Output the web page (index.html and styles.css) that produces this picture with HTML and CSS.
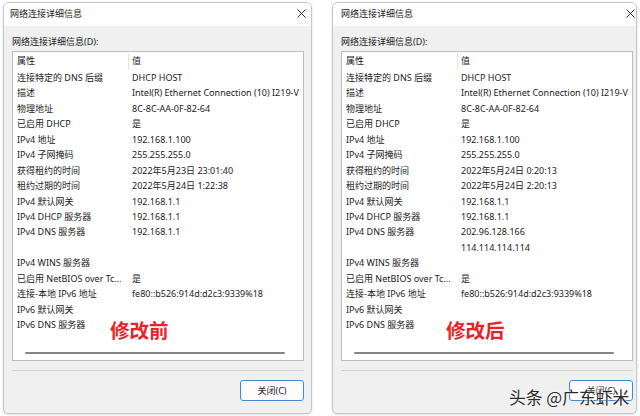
FILE: index.html
```
<!DOCTYPE html>
<html lang="zh-CN">
<head>
<meta charset="utf-8">
<title>网络连接详细信息</title>
<link rel="stylesheet" href="styles.css">
</head>
<body>
<div class="desk">
  <div class="win">
    <div class="titlebar">
      <span class="title">网络连接详细信息</span>
      <svg class="close-x" width="9" height="9" viewBox="0 0 9 9"><path d="M0.5 0.5L8.5 8.5M8.5 0.5L0.5 8.5" stroke="#2b2b2b" stroke-width="1" fill="none"/></svg>
    </div>
    <div class="content">
      <div class="label">网络连接详细信息(D):</div>
      <div class="list">
        <div class="head"><span class="h1">属性</span><span class="h2">值</span></div>
        <div class="row"><span class="c1">连接特定的 DNS 后缀</span><span class="c2">DHCP HOST</span></div>
        <div class="row"><span class="c1">描述</span><span class="c2">Intel(R) Ethernet Connection (10) I219-V</span></div>
        <div class="row"><span class="c1">物理地址</span><span class="c2">8C-8C-AA-0F-82-64</span></div>
        <div class="row"><span class="c1">已启用 DHCP</span><span class="c2">是</span></div>
        <div class="row"><span class="c1">IPv4 地址</span><span class="c2">192.168.1.100</span></div>
        <div class="row"><span class="c1">IPv4 子网掩码</span><span class="c2">255.255.255.0</span></div>
        <div class="row"><span class="c1">获得租约的时间</span><span class="c2">2022年5月23日 23:01:40</span></div>
        <div class="row"><span class="c1">租约过期的时间</span><span class="c2">2022年5月24日 1:22:38</span></div>
        <div class="row"><span class="c1">IPv4 默认网关</span><span class="c2">192.168.1.1</span></div>
        <div class="row"><span class="c1">IPv4 DHCP 服务器</span><span class="c2">192.168.1.1</span></div>
        <div class="row"><span class="c1">IPv4 DNS 服务器</span><span class="c2">192.168.1.1</span></div>
        <div class="row"><span class="c1"></span><span class="c2"></span></div>
        <div class="row"><span class="c1">IPv4 WINS 服务器</span><span class="c2"></span></div>
        <div class="row"><span class="c1">已启用 NetBIOS over Tc...</span><span class="c2">是</span></div>
        <div class="row"><span class="c1">连接-本地 IPv6 地址</span><span class="c2">fe80::b526:914d:d2c3:9339%18</span></div>
        <div class="row"><span class="c1">IPv6 默认网关</span><span class="c2"></span></div>
        <div class="row"><span class="c1">IPv6 DNS 服务器</span><span class="c2"></span></div>
        <div class="note note-before">修改前</div>
        <div class="hscroll"></div>
      </div>
      <div class="sep"></div>
      <div class="footer"><button class="btn">关闭(C)</button></div>
    </div>
  </div>

  <div class="win win-right">
    <div class="titlebar">
      <span class="title">网络连接详细信息</span>
      <svg class="close-x" width="9" height="9" viewBox="0 0 9 9"><path d="M0.5 0.5L8.5 8.5M8.5 0.5L0.5 8.5" stroke="#2b2b2b" stroke-width="1" fill="none"/></svg>
    </div>
    <div class="content">
      <div class="label">网络连接详细信息(D):</div>
      <div class="list">
        <div class="head"><span class="h1">属性</span><span class="h2">值</span></div>
        <div class="row"><span class="c1">连接特定的 DNS 后缀</span><span class="c2">DHCP HOST</span></div>
        <div class="row"><span class="c1">描述</span><span class="c2">Intel(R) Ethernet Connection (10) I219-V</span></div>
        <div class="row"><span class="c1">物理地址</span><span class="c2">8C-8C-AA-0F-82-64</span></div>
        <div class="row"><span class="c1">已启用 DHCP</span><span class="c2">是</span></div>
        <div class="row"><span class="c1">IPv4 地址</span><span class="c2">192.168.1.100</span></div>
        <div class="row"><span class="c1">IPv4 子网掩码</span><span class="c2">255.255.255.0</span></div>
        <div class="row"><span class="c1">获得租约的时间</span><span class="c2">2022年5月24日 0:20:13</span></div>
        <div class="row"><span class="c1">租约过期的时间</span><span class="c2">2022年5月24日 2:20:13</span></div>
        <div class="row"><span class="c1">IPv4 默认网关</span><span class="c2">192.168.1.1</span></div>
        <div class="row"><span class="c1">IPv4 DHCP 服务器</span><span class="c2">192.168.1.1</span></div>
        <div class="row"><span class="c1">IPv4 DNS 服务器</span><span class="c2">202.96.128.166</span></div>
        <div class="row"><span class="c1"></span><span class="c2">114.114.114.114</span></div>
        <div class="row"><span class="c1">IPv4 WINS 服务器</span><span class="c2"></span></div>
        <div class="row"><span class="c1">已启用 NetBIOS over Tc...</span><span class="c2">是</span></div>
        <div class="row"><span class="c1">连接-本地 IPv6 地址</span><span class="c2">fe80::b526:914d:d2c3:9339%18</span></div>
        <div class="row"><span class="c1">IPv6 默认网关</span><span class="c2"></span></div>
        <div class="row"><span class="c1">IPv6 DNS 服务器</span><span class="c2"></span></div>
        <div class="note note-after">修改后</div>
        <div class="hscroll"></div>
      </div>
      <div class="sep"></div>
      <div class="footer"><button class="btn">关闭(C)</button></div>
    </div>
  </div>

  <div class="watermark">头条 @广东虾米</div>
</div>
</body>
</html>
```

FILE: styles.css
```
* { box-sizing: border-box; }

html, body {
  margin: 0;
  padding: 0;
  background: #ffffff;
}

body {
  width: 640px;
  height: 416px;
  overflow: hidden;
  font-family: "Noto Sans", "Noto Sans CJK SC", sans-serif;
  font-size: 9px;
  color: #1b1b1b;
}

.desk {
  position: relative;
  display: flex;
  gap: 20px;
  padding: 2px 0 0 3px;
  height: 416px;
}

.win {
  width: 309px;
  height: 412px;
  border: 1px solid #c6c6c6;
  border-radius: 6px 6px 5px 5px;
  background: #f0f0f0;
  overflow: hidden;
  display: flex;
  flex-direction: column;
  box-shadow: 0 1px 3px rgba(0, 0, 0, 0.12);
}

.win-right {
  width: 305px;
}

.titlebar {
  height: 23px;
  flex: none;
  background: #ffffff;
  display: flex;
  align-items: center;
  justify-content: space-between;
  padding: 0 5px 2px 6px;
}

.win-right .titlebar {
  padding: 0 1px 2px 8px;
}

.title {
  line-height: 12px;
}

.close-x {
  display: block;
}

.content {
  flex: 1;
  display: flex;
  flex-direction: column;
  padding: 10px 7px 0 8px;
}

.win-right .content {
  padding: 10px 3px 0 8px;
}

.label {
  height: 12px;
  line-height: 12px;
}

.list {
  position: relative;
  margin-top: 3px;
  height: 310px;
  border: 1px solid #bdbdbd;
  background: #ffffff;
  overflow: hidden;
  flex: none;
}

.head {
  height: 18px;
  display: flex;
  align-items: center;
  white-space: nowrap;
}

.h1 {
  width: 116px;
  padding-left: 4px;
  line-height: 16px;
  border-right: 1px solid #e3e3e3;
}

.h2 {
  padding-left: 3px;
  line-height: 16px;
}

.row {
  height: 15.44px;
  line-height: 15.44px;
  display: flex;
  white-space: nowrap;
}

.c1 {
  width: 119px;
  flex: none;
  padding-left: 4px;
  overflow: hidden;
}

.c2 {
  flex: none;
}

.note {
  position: absolute;
  top: 268px;
  font-size: 19.5px;
  line-height: 20px;
  font-weight: 700;
  color: #e3242b;
  font-family: "Noto Sans CJK SC", sans-serif;
}

.note-before { left: 97px; }
.note-after { left: 104px; }

.hscroll {
  position: absolute;
  left: 12px;
  bottom: 6px;
  width: 260px;
  height: 2px;
  border-radius: 1px;
  background: #858585;
}

.sep {
  margin-top: 9px;
  height: 1px;
  background: #d2d2d2;
  flex: none;
}

.footer {
  margin-top: 9px;
  display: flex;
  justify-content: flex-end;
}

.btn {
  width: 64px;
  height: 21px;
  padding: 0;
  border: 1px solid #3d8ad6;
  border-radius: 3px;
  background: #fdfdfd;
  font-family: "Noto Sans", "Noto Sans CJK SC", sans-serif;
  font-size: 9px;
  color: #1b1b1b;
}

.watermark {
  position: absolute;
  left: 509px;
  top: 388px;
  font-family: "Noto Sans CJK SC", sans-serif;
  font-size: 16.8px;
  line-height: 18px;
  color: #2a2a2a;
  white-space: nowrap;
  text-shadow: 0 0 2px #ffffff, 0 0 2px #ffffff;
}
```
